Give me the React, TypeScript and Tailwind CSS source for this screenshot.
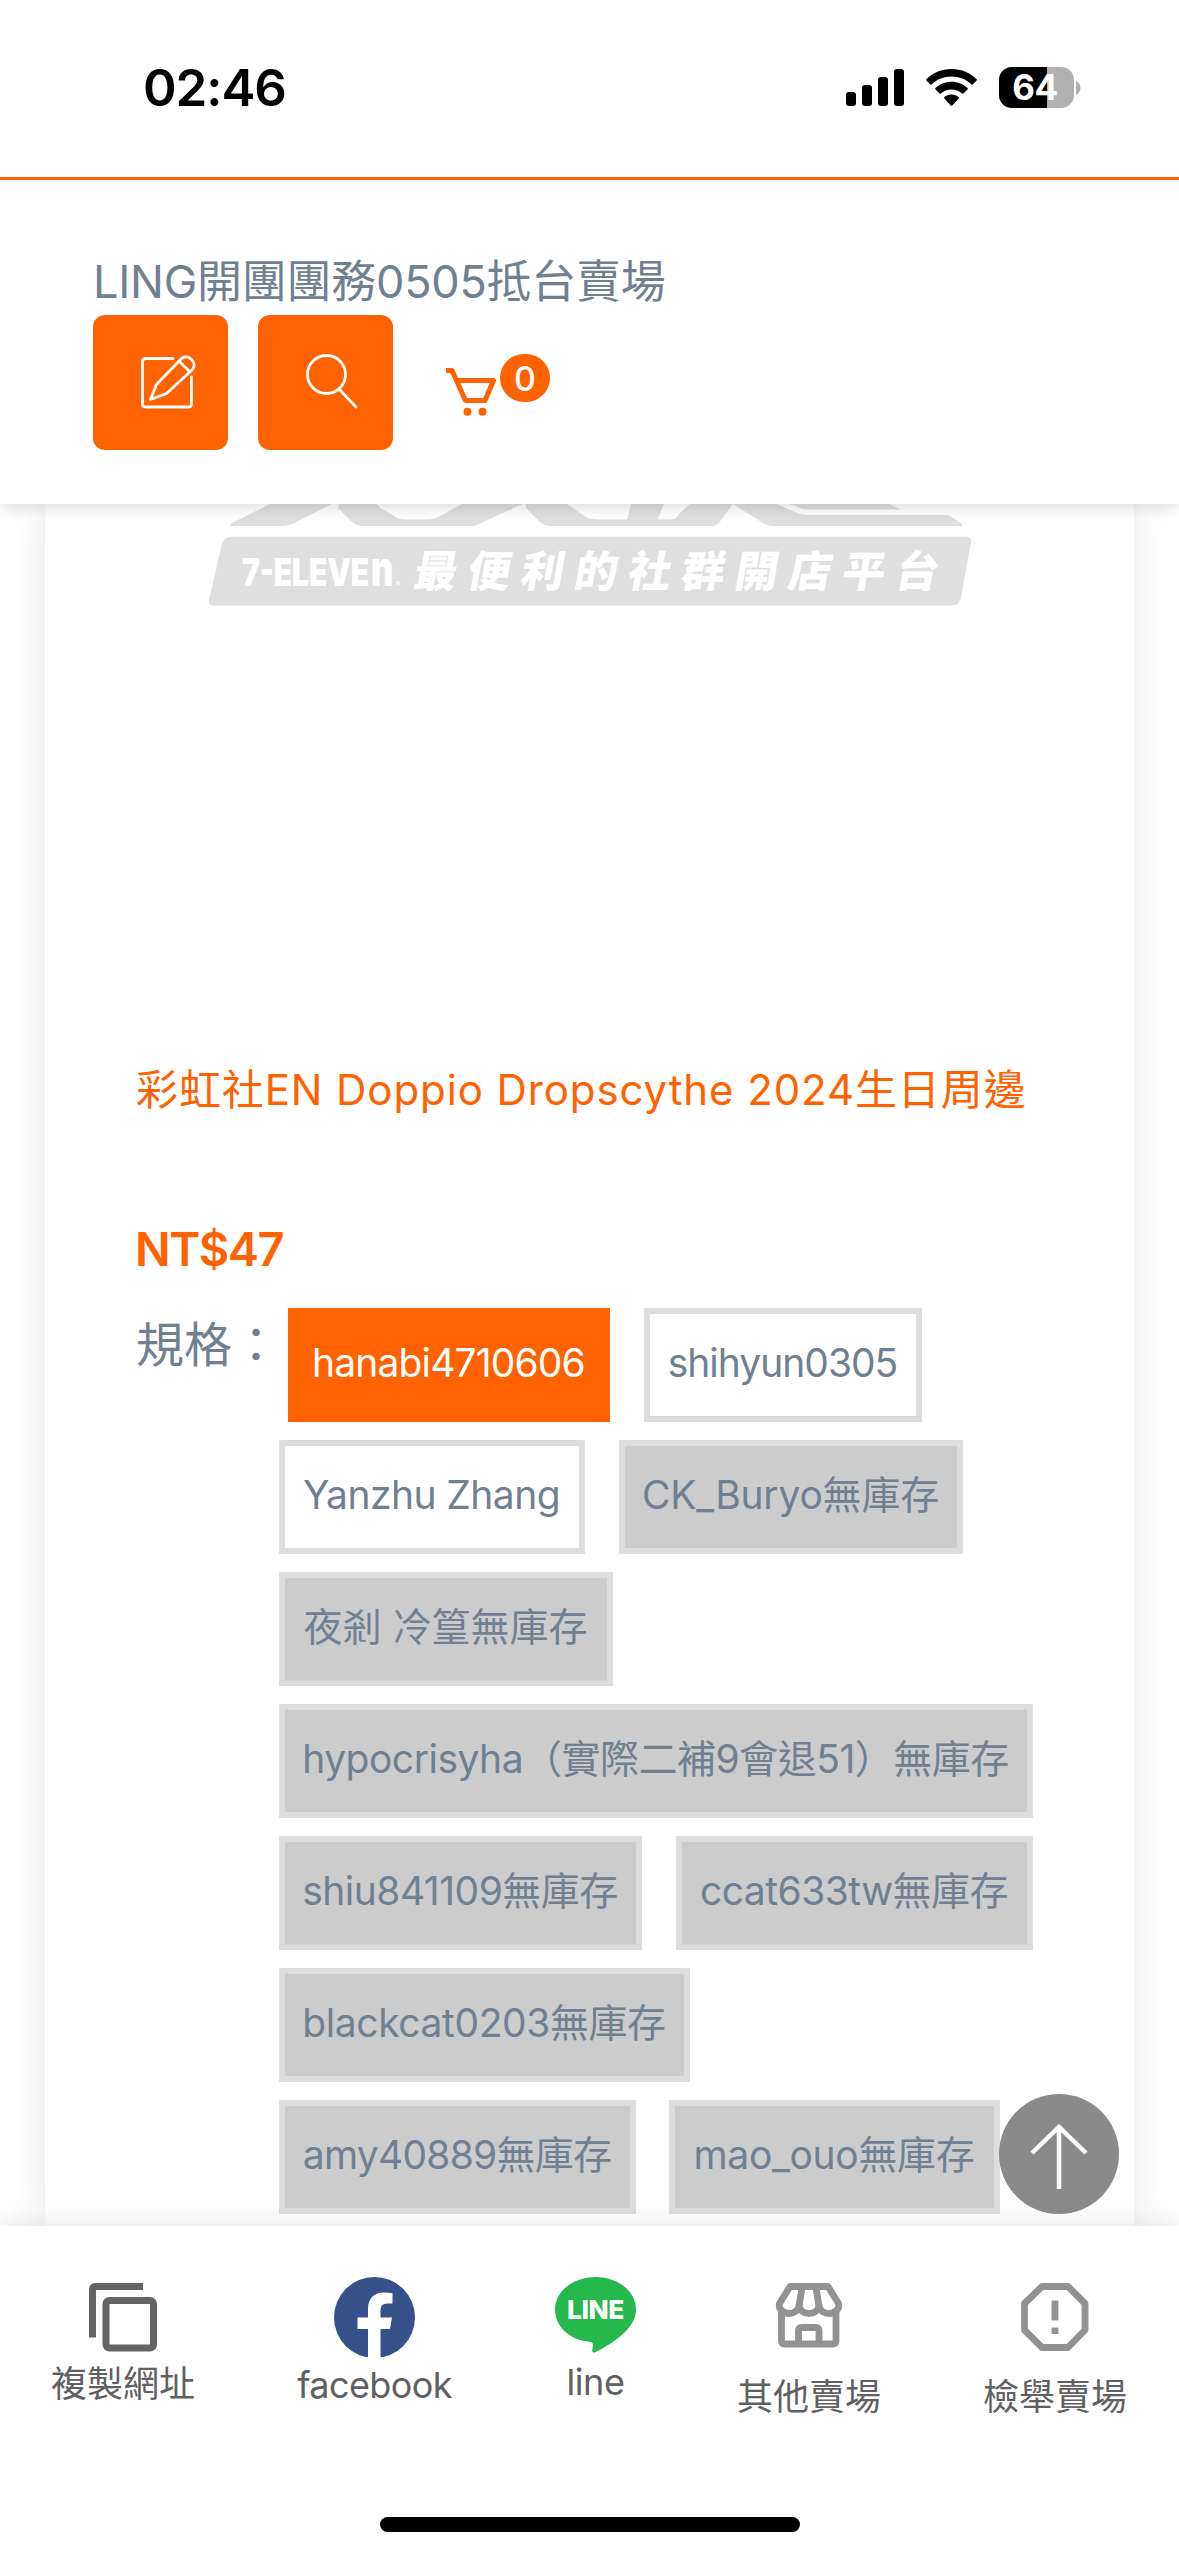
import React from 'react';
import clsx from 'clsx';

type Option = {
  label: string;
  state?: 'active' | 'soldout';
  size: string;
};

const optionRows: Option[][] = [
  [
    { label: 'hanabi4710606', state: 'active', size: 'ml-[9px] w-[322px] tracking-[-0.85px]' },
    { label: 'shihyun0305', size: 'w-[278px] tracking-[-1px]' },
  ],
  [
    { label: 'Yanzhu Zhang', size: 'w-[306px] tracking-[-0.55px]' },
    { label: 'CK_Buryo無庫存', state: 'soldout', size: 'w-[344px] tracking-[-0.2px]' },
  ],
  [{ label: '夜剎 冷篁無庫存', state: 'soldout', size: 'w-[334px]' }],
  [{ label: 'hypocrisyha（實際二補9會退51）無庫存', state: 'soldout', size: 'w-[754px] tracking-[-0.5px]' }],
  [
    { label: 'shiu841109無庫存', state: 'soldout', size: 'w-[363px] tracking-[-0.5px]' },
    { label: 'ccat633tw無庫存', state: 'soldout', size: 'w-[357px] tracking-[-0.5px]' },
  ],
  [{ label: 'blackcat0203無庫存', state: 'soldout', size: 'w-[411px] tracking-[-0.4px]' }],
  [
    { label: 'amy40889無庫存', state: 'soldout', size: 'w-[357px] tracking-[-0.75px]' },
    { label: 'mao_ouo無庫存', state: 'soldout', size: '-ml-px w-[331px] tracking-[-0.3px]' },
  ],
];

const StatusBar: React.FC = () => (
  <div className="relative z-20 flex h-[177px] shrink-0 justify-between bg-white pl-[143px] pr-[98px]">
    <span className="mt-[57px] text-[51px] leading-[62px] font-semibold tracking-[-1.1px] text-black">02:46</span>
    <div className="mt-[67px] flex h-[41px] items-start">
      <svg width="58" height="41" viewBox="0 0 58 41" fill="#000">
        <rect x="0" y="25" width="10" height="14" rx="3" />
        <rect x="16" y="18" width="10" height="21" rx="3" />
        <rect x="32" y="10" width="10" height="29" rx="3" />
        <rect x="48" y="2" width="10" height="37" rx="3" />
      </svg>
      <svg className="ml-[22px]" width="51" height="41" viewBox="0 0 51 41" fill="#000">
        <path d="M25.5 2C35.5 2 44.5 6 50.6 12.2Q51.2 12.9 50.6 13.6L46.6 17.4Q46 17.9 45.3 17.3C40 12.4 33.1 9.6 25.5 9.6S11 12.4 5.7 17.3Q5 17.9 4.4 17.4L.4 13.6Q-.2 12.9 .4 12.2C6.5 6 15.5 2 25.5 2Z" />
        <path d="M25.5 14.8C31.8 14.8 37.5 17.2 41.5 21.1Q42.1 21.8 41.5 22.5L37.4 26.5Q36.8 27 36.1 26.4C33.3 23.9 29.6 22.4 25.5 22.4S17.7 23.9 14.9 26.4Q14.2 27 13.6 26.5L9.5 22.5Q8.9 21.8 9.5 21.1C13.5 17.2 19.2 14.8 25.5 14.8Z" />
        <path d="M25.5 27.6C28.3 27.6 30.7 28.5 32.6 30Q33.3 30.7 32.6 31.4L26.3 38.4Q25.5 39.1 24.7 38.4L18.4 31.4Q17.7 30.7 18.4 30C20.3 28.5 22.7 27.6 25.5 27.6Z" />
      </svg>
      <div className="relative ml-[22px] flex h-[41px] w-[75px] items-center justify-center overflow-hidden rounded-[13px] bg-[#b1b1b1]">
        <div className="absolute inset-y-0 left-0 w-12 bg-black" />
        <span className="relative -ml-[3px] text-[35px] leading-[41px] font-bold tracking-[-0.5px] text-white">64</span>
      </div>
      <svg className="mt-[14px] ml-[2px]" width="5" height="14" viewBox="0 0 5 14" fill="#b1b1b1">
        <path d="M0 0C3 1.5 4.5 4 4.5 7S3 12.5 0 14Z" />
      </svg>
    </div>
  </div>
);

const EditIcon = () => (
  <svg width="56" height="56" viewBox="0 0 56 56" fill="none" stroke="#fff" strokeWidth="2.8" strokeLinecap="round" strokeLinejoin="round">
    <path d="M32 4.5H4.5Q1.5 4.5 1.5 7.5V50Q1.5 53 4.5 53H47.5Q50.5 53 50.5 50V23" />
    <path d="M9.5 45.5L15.5 30.5L40 5C47 -1.5 57.5 9 51 16L25.5 39.5Z" />
    <path d="M38.5 7.5L47.5 16.5" />
  </svg>
);

const SearchIcon = () => (
  <svg width="54" height="56" viewBox="0 0 54 56" fill="none" stroke="#fff" strokeWidth="2.8" strokeLinecap="round">
    <circle cx="20.5" cy="20.5" r="19" />
    <path d="M33 35L50 53" />
  </svg>
);

const CartIcon = () => (
  <svg width="50" height="48" viewBox="0 0 50 48" fill="none">
    <path d="M0 2.5H6L19.5 32.5H39L47.5 12.5H11" stroke="#ff6200" strokeWidth="5" strokeLinejoin="round" />
    <circle cx="21.5" cy="43.8" r="4" fill="#ff6200" />
    <circle cx="36.5" cy="43.8" r="4" fill="#ff6200" />
  </svg>
);

const Header: React.FC = () => (
  <header className="relative z-10 h-[327px] shrink-0 border-t-[3px] border-[#ff6200] bg-white px-[93px] shadow-[0_3px_15px_rgba(0,0,0,0.15)]">
    <h1 className="mt-[72px] text-[45px] leading-[60px] font-normal tracking-[-0.25px] text-[#708090]">
      LING開團團務0505抵台賣場
    </h1>
    <div className="mt-[3px] flex items-start">
      <button className="flex h-[135px] w-[135px] rounded-[12px] bg-[#ff6200] pt-[39px] pl-12">
        <EditIcon />
      </button>
      <button className="ml-[30px] flex h-[135px] w-[135px] rounded-[12px] bg-[#ff6200] pt-[39px] pl-12">
        <SearchIcon />
      </button>
      <div className="mt-[39px] ml-[53px] flex items-start">
        <div className="mt-[14px]">
          <CartIcon />
        </div>
        <span className="ml-1 flex h-12 w-[50px] items-center justify-center rounded-full bg-[#ff6200] text-[34px] font-medium text-white">
          0
        </span>
      </div>
    </div>
  </header>
);

// Lower part of the shop logo, the rest is scrolled under the header
const ShopLogo = () => (
  <svg className="ml-[155px] block" width="780" height="110" viewBox="0 0 780 110">
    <g fill="#dfdfdf">
      <path d="M70 0H132L98 17Q90 22 82 22H31Q29 21 32 19Z" />
      <path d="M139 0H175Q178 0 180 4L193 11Q198 15.5 205 15.5H228Q234 15.5 240 12L262 0H323L285 17Q278 22 270 22H163Q156 22 151 17L138 4Z" />
      <path d="M326 0H367L386 13Q390 15.5 398 15.5H427L431 0H464L457.5 15.5H470Q476 15.5 479 10L490 0H533L521 16Q518 22 511 22H351Q344 22 340 18L326 4Z" />
      <path d="M533 0H577L595 8Q601 11 610 11H746Q750 11 753 14L762 20V22H574Q566 22 560 17Z" />
      <path d="M589 0H689L701 5.5H610Q602 5.5 598 3Z" />
      <path d="M32 32.5H766Q772 33 771 38L761 94Q759 101.5 751 101.5H13Q8 101.5 9 96L22 40Q24 32.5 32 32.5Z" />
    </g>
    <g fill="#fff" fontWeight="900">
      <text transform="translate(42 82) scale(0.73 1)" fontSize="38.5" textLength="174" lengthAdjust="spacingAndGlyphs">
        7-ELEVE
      </text>
      <text transform="translate(171 82) scale(0.7 1)" fontSize="49">
        n
      </text>
    </g>
    <text x="196" y="82" fill="#fff" fontSize="6">
      ®
    </text>
    <text
      transform="translate(212 83) skewX(-10)"
      fill="#fff"
      fontSize="43"
      fontWeight="900"
      letterSpacing="10.5"
      fontFamily="'Noto Sans CJK TC', sans-serif"
    >
      最便利的社群開店平台
    </text>
  </svg>
);

const OptionChip: React.FC<{ option: Option }> = ({ option }) => (
  <button
    className={clsx(
      'flex h-[114px] shrink-0 items-center justify-center border-[6px] pr-px pb-[3px] text-[39px] font-normal whitespace-nowrap',
      option.size,
      option.state === 'active' && 'border-[#ff6200] bg-[#ff6200] text-white',
      option.state === 'soldout' && 'border-[#ddd] bg-[#ccc] text-[#708090]',
      !option.state && 'border-[#ddd] bg-white text-[#708090]'
    )}
  >
    {option.label}
  </button>
);

const CopyIcon = () => (
  <svg width="68" height="69" viewBox="0 0 68 69" fill="none" stroke="#646464" strokeWidth="7">
    <path d="M54 3.5H7Q3.5 3.5 3.5 7V54.5" />
    <rect x="17" y="17.5" width="47.5" height="47.5" rx="3.5" />
  </svg>
);

const FacebookIcon = () => (
  <svg width="81" height="81" viewBox="0 0 81 81">
    <circle cx="40.5" cy="40.5" r="40.5" fill="#365089" />
    <path d="M34 81V52H23.5V40.5H34V32C34 21.5 40 15.5 50 15.5Q55 15.5 58.5 16.3V26.5H53Q46.5 26.5 46.5 33V40.5H58L56 52H46.5V81Z" fill="#fff" />
  </svg>
);

const LineIcon = () => (
  <svg width="81" height="76" viewBox="0 0 81 76">
    <path
      d="M40.5 0C63 0 81 14.5 81 32.5C81 40 77.5 47 71.5 53.5C63 62.5 50 70.5 40.5 75Q37 76.5 37.2 73.5L38 68Q38.3 65 33 64.5C14 62.5 0 49 0 32.5C0 14.5 18 0 40.5 0Z"
      fill="#25b84c"
    />
    <text x="12" y="42" fill="#fff" fontSize="26" fontWeight="800" textLength="57" lengthAdjust="spacingAndGlyphs">
      LINE
    </text>
  </svg>
);

const StoreIcon = () => (
  <svg width="68" height="65" viewBox="0 0 68 65" fill="none" stroke="#919392" strokeWidth="6.8" strokeLinejoin="round">
    <path d="M15 3.5H53L63.5 20.5C65 26 59.5 30.5 54 30.5C49 30.5 44 27 44 22.5C44 27 39 30.5 34 30.5S24 27 24 22.5C24 27 19 30.5 14 30.5C8.5 30.5 3 26 4.5 20.5Z" />
    <path d="M24 23L27 5M44 23L41 5" />
    <path d="M6.5 28V57.5Q6.5 61 10 61H57.5Q61 61 61 57.5V28" />
    <path d="M23.5 60V48Q23.5 44.5 27 44.5H40.5Q44 44.5 44 48V60" />
  </svg>
);

const ReportIcon = () => (
  <svg width="68" height="68" viewBox="0 0 68 68" fill="none" stroke="#919392" strokeWidth="6.8" strokeLinejoin="round">
    <path d="M21 3.5H47L64 20.5V47L47 64.5H21L3.5 47V20.5Z" />
    <path d="M34 17.5V37.5M34 44.5V51" strokeLinejoin="miter" />
  </svg>
);

const tabs = [
  { label: '複製網址', icon: <CopyIcon />, box: 'ml-[48px] w-[150px] pt-[57px]', text: 'mt-[7px]' },
  { label: 'facebook', icon: <FacebookIcon />, box: 'ml-[94px] w-[165px] pt-[51px] tracking-[-0.6px]', text: 'mt-[2px]' },
  { label: 'line', icon: <LineIcon />, box: 'ml-[88px] w-[101px] pt-[51px] tracking-[-0.4px]', text: 'mt-[4px]' },
  { label: '其他賣場', icon: <StoreIcon />, box: 'ml-[88px] w-[150px] pt-[57px]', text: 'mt-[24px]' },
  { label: '檢舉賣場', icon: <ReportIcon />, box: 'ml-[96px] w-[150px] pt-[57px]', text: 'mt-[21px]' },
];

const App: React.FC = () => {
  return (
    <div className="flex h-[2556px] w-[1179px] flex-col overflow-hidden bg-white font-[Inter,'Noto_Sans_CJK_TC',sans-serif]">
      <StatusBar />
      <Header />

      <main className="relative h-[1722px] shrink-0 overflow-hidden">
        <div className="mx-[45px] h-full bg-white shadow-[0_0_36px_rgba(0,0,0,0.1)]">
          <ShopLogo />

          <div className="pl-[91px]">
            <h2 className="mt-[446px] text-[42px] leading-[60px] font-normal tracking-[0.9px] whitespace-nowrap text-[#ff6200]">
              彩虹社EN Doppio Dropscythe 2024生日周邊
            </h2>
            <p className="mt-[97px] -ml-px text-[47px] leading-[64px] font-semibold tracking-[-1.5px] text-[#ff6200]">NT$47</p>

            <div className="mt-[27px] flex items-start">
              <span className="mt-[5px] w-[143px] text-[48px] leading-[64px] font-normal whitespace-nowrap text-[#708090]">規格：</span>
              <div className="flex flex-col gap-[18px]">
                {optionRows.map((row, index) => (
                  <div key={index} className="flex gap-[34px]">
                    {row.map((option) => (
                      <OptionChip key={option.label} option={option} />
                    ))}
                  </div>
                ))}
              </div>
            </div>
          </div>
        </div>

        {/* Back to top */}
        <button className="absolute right-[60px] bottom-[12px] flex h-[120px] w-[120px] justify-center rounded-full bg-[#8a8a8a] pt-[30px]">
          <svg width="58" height="66" viewBox="0 0 58 66" fill="none" stroke="#fff" strokeWidth="4.5">
            <path d="M29 65V3M2 29L29 3L56 29" />
          </svg>
        </button>
      </main>

      <footer className="relative z-10 flex h-[330px] shrink-0 flex-col items-center bg-white shadow-[0_-3px_24px_rgba(0,0,0,0.1)]">
        <nav className="flex h-[291px] w-full items-start">
          {tabs.map((tab) => (
            <a key={tab.label} className={clsx('flex shrink-0 flex-col items-center text-[36px] leading-[50px] font-normal text-[#606060]', tab.box)}>
              {tab.icon}
              <span className={tab.text}>{tab.label}</span>
            </a>
          ))}
        </nav>
        <div className="h-[15px] w-[420px] rounded-full bg-black" />
      </footer>
    </div>
  );
};

export default App;
